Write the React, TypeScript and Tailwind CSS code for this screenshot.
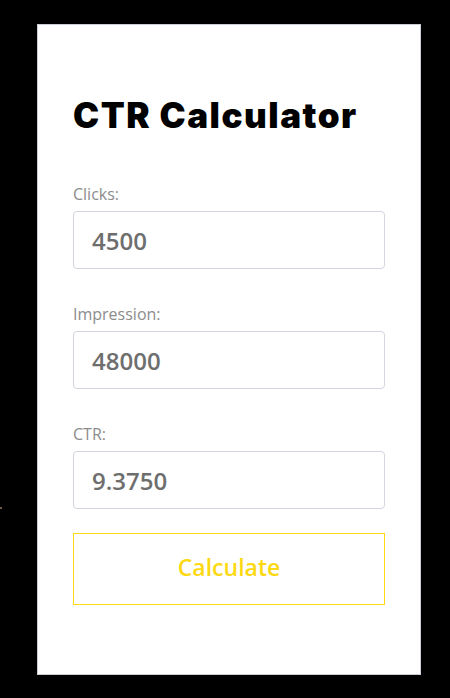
import { useState } from "react";

const sans = "font-['Open_Sans','Liberation_Sans',sans-serif]";

function Field({
  label,
  value,
  onChange,
  readOnly,
}: {
  label: string;
  value: string;
  onChange?: (v: string) => void;
  readOnly?: boolean;
}) {
  return (
    <div className="flex flex-col">
      <label className={`${sans} text-[16px] leading-5 text-[#8c8c8c]`}>
        {label}
      </label>
      <input
        value={value}
        readOnly={readOnly}
        onChange={(e) => onChange?.(e.target.value)}
        className={`${sans} mt-[7px] h-[58px] w-full rounded-[4px] border border-[#d3d6dc] bg-white px-[18px] text-[24px] font-semibold text-[#6e6e6e] outline-none`}
      />
    </div>
  );
}

export default function App() {
  const [clicks, setClicks] = useState("4500");
  const [impressions, setImpressions] = useState("48000");
  const [ctr, setCtr] = useState("9.3750");

  const calculate = () => {
    const c = parseFloat(clicks);
    const i = parseFloat(impressions);
    if (!i) return;
    setCtr(((c / i) * 100).toFixed(4));
  };

  return (
    <div className="relative min-h-[698px] bg-black pt-6 pl-[37px]">
      <span className="absolute left-0 top-[507px] h-[2px] w-[2px] bg-[#6b5a48]" />
      <div className="flex h-[651px] w-[384px] flex-col border border-[#c9ced6] bg-white px-[35px] pt-[73px]">
        <h1 className="font-['Inter',sans-serif] text-[35px] font-black leading-[34px] tracking-[1.5px] text-black">
          CTR Calculator
        </h1>
        <div className="mt-[52px] flex flex-col gap-[35px]">
          <Field label="Clicks:" value={clicks} onChange={setClicks} />
          <Field label="Impression:" value={impressions} onChange={setImpressions} />
          <Field label="CTR:" value={ctr} readOnly />
        </div>
        <button
          onClick={calculate}
          className={`${sans} mt-6 h-[72px] w-full border border-[#fcd913] bg-white pb-[4px] text-[23px] font-semibold text-[#fcd913]`}
        >
          Calculate
        </button>
      </div>
    </div>
  );
}
